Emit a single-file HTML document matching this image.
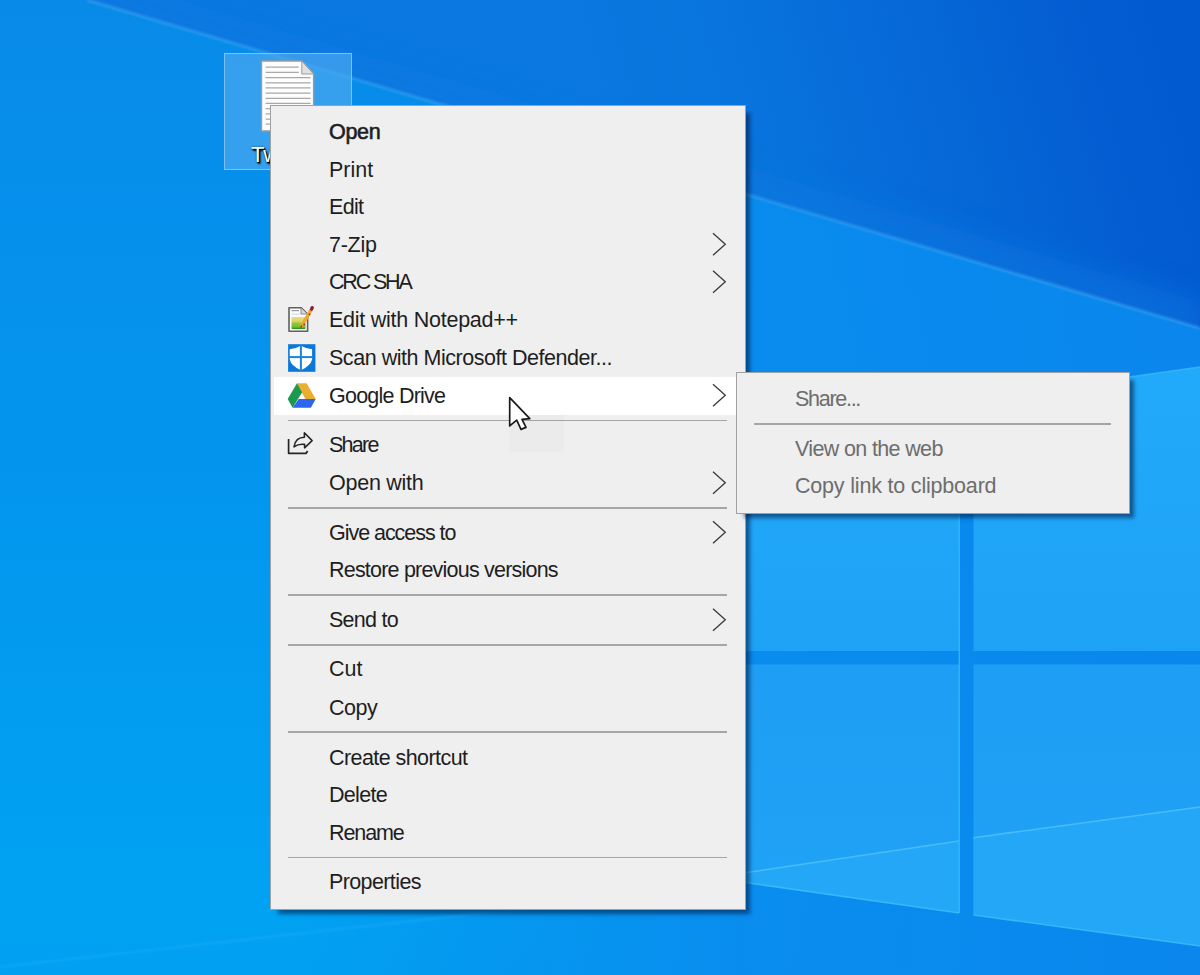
<!DOCTYPE html>
<html><head><meta charset="utf-8"><style>
html,body{margin:0;padding:0;width:1200px;height:975px;overflow:hidden;background:#0a8ae6;}
body{position:relative;font-family:"Liberation Sans", sans-serif;}
.t{position:absolute;font-size:21.5px;line-height:20px;white-space:nowrap;color:#1e1e1e;}
.sep{position:absolute;height:1.5px;background:#a6a6a6;}
svg{position:absolute;overflow:visible;}
</style></head><body>

<svg width="1200" height="975" style="left:0;top:0">
<defs>
<linearGradient id="gbase" x1="0" y1="0" x2="0" y2="1"><stop offset="0" stop-color="#088ae8"/><stop offset="0.2" stop-color="#068fec"/><stop offset="0.5" stop-color="#0396ee"/><stop offset="0.92" stop-color="#01a2f3"/><stop offset="1" stop-color="#01a0f2"/></linearGradient>
<linearGradient id="gover" x1="0" y1="0" x2="1200" y2="0" gradientUnits="userSpaceOnUse"><stop offset="0.25" stop-color="#0a88ec" stop-opacity="0"/><stop offset="0.62" stop-color="#0a8aee" stop-opacity="0.85"/><stop offset="1" stop-color="#0a86ec" stop-opacity="1"/></linearGradient>
<linearGradient id="gtop" x1="600" y1="150" x2="1150" y2="0" gradientUnits="userSpaceOnUse"><stop offset="0" stop-color="#0a78e0"/><stop offset="0.3" stop-color="#0873dc"/><stop offset="0.85" stop-color="#045ed2"/><stop offset="1" stop-color="#025ad0"/></linearGradient>
<clipPath id="ctop"><polygon points="87,0 1200,0 1200,328"/></clipPath>
<filter id="blur12" x="-20%" y="-50%" width="140%" height="200%"><feGaussianBlur stdDeviation="14"/></filter>
<linearGradient id="gpane" x1="0" y1="0" x2="0" y2="1"><stop offset="0" stop-color="#22aafa"/><stop offset="1" stop-color="#1ea2f6"/></linearGradient>
<linearGradient id="gpane2" x1="0" y1="0" x2="0" y2="1"><stop offset="0" stop-color="#1e9ef4"/><stop offset="1" stop-color="#20a2f6"/></linearGradient>
<filter id="blur1" x="-5%" y="-5%" width="110%" height="110%"><feGaussianBlur stdDeviation="1"/></filter>
</defs>
<rect width="1200" height="975" fill="url(#gbase)"/>
<rect width="1200" height="975" fill="url(#gover)"/>
<polygon points="87,0 1200,0 1200,328" fill="url(#gtop)"/>
<g clip-path="url(#ctop)"><line x1="87" y1="-8" x2="1200" y2="320" stroke="#0a7ae2" stroke-width="36" opacity="0.55" filter="url(#blur12)"/></g>
<line x1="87" y1="0" x2="1200" y2="328" stroke="#4aaef6" stroke-width="3" opacity="0.45" filter="url(#blur1)"/>
<!-- panes -->
<polygon points="745,431 959,401 959,651 745,651" fill="url(#gpane)"/>
<polygon points="973.5,399 1200,367 1200,651 973.5,651" fill="url(#gpane)"/>
<polygon points="745,664.5 959,664.5 959,913 745,882.5" fill="url(#gpane2)"/>
<polygon points="973.5,664.5 1200,664.5 1200,946 973.5,915" fill="url(#gpane2)"/>
<line x1="973.5" y1="399" x2="1200" y2="367" stroke="#40bcfc" stroke-width="1.5" opacity="0.7"/>
<polygon points="745,872.8 959,841 959,913 745,882.5" fill="#24a7f6"/>
<polygon points="973.5,837.7 1200,807 1200,946 973.5,915" fill="#24a7f6"/>
<line x1="745" y1="872.8" x2="959" y2="841" stroke="#50c4fc" stroke-width="1.6" opacity="0.8"/>
<line x1="973.5" y1="837.7" x2="1200" y2="807" stroke="#50c4fc" stroke-width="1.6" opacity="0.8"/>
<line x1="745" y1="882.5" x2="959" y2="913" stroke="#40c0fc" stroke-width="1.6" opacity="0.75"/>
<line x1="973.5" y1="915" x2="1200" y2="946" stroke="#40c0fc" stroke-width="1.6" opacity="0.75"/>
<line x1="959.3" y1="380" x2="959.3" y2="913" stroke="#30c4ff" stroke-width="1.3" opacity="0.85"/>
<line x1="0" y1="967" x2="745" y2="884" stroke="#30b4fa" stroke-width="2" opacity="0.35" filter="url(#blur1)"/>
</svg>

<div style="position:absolute;left:224px;top:52.5px;width:126px;height:115px;background:rgba(78,170,240,0.66);border:1.5px solid rgba(150,205,250,0.75)"></div>
<svg style="left:0;top:0" width="1200" height="975">
<path d="M261.5,61 H301.8 L313.6,73.6 V131 H261.5 Z" fill="#fdfdfd" stroke="#9a9a9a" stroke-width="1.4"/>
<path d="M301.8,61 V74 H313.6 Z" fill="#e0e0e0" stroke="#9a9a9a" stroke-width="1"/>
<g stroke="#a8a8a8" stroke-width="1.3">
<line x1="265.6" y1="67.2" x2="298.8" y2="67.2"/><line x1="265.6" y1="72.4" x2="298.8" y2="72.4"/>
<line x1="265.6" y1="77.7" x2="310.6" y2="77.7"/><line x1="265.6" y1="82.8" x2="310.6" y2="82.8"/>
<line x1="265.6" y1="87.9" x2="310.6" y2="87.9"/><line x1="265.6" y1="93.1" x2="310.6" y2="93.1"/>
<line x1="265.6" y1="98.3" x2="310.6" y2="98.3"/><line x1="265.6" y1="103.4" x2="310.6" y2="103.4"/>
<line x1="265.6" y1="108.7" x2="310.6" y2="108.7"/><line x1="265.6" y1="113.8" x2="310.6" y2="113.8"/>
<line x1="265.6" y1="119.1" x2="310.6" y2="119.1"/><line x1="265.6" y1="124.2" x2="310.6" y2="124.2"/>
</g>
</svg>
<div style="position:absolute;left:251px;top:145px;font-size:22px;line-height:20px;color:#fff;text-shadow:1px 1px 1px #000,1.5px 1.5px 2px #000,0 0 2px rgba(0,0,0,0.6);white-space:nowrap">Tw</div>

<div style="position:absolute;left:270px;top:105px;width:474px;height:803px;background:#efefef;border:1px solid #a0a0a0;box-shadow:6px 6px 4px -2px rgba(0,20,60,0.55)"></div>
<div style="position:absolute;left:274px;top:377px;width:468px;height:37.5px;background:#ffffff"></div>

<div class="t" style="left:329px;top:121.5px;-webkit-text-stroke:0.6px #1e1e1e;letter-spacing:-0.333px;">Open</div>
<div class="t" style="left:329px;top:159.5px;letter-spacing:0.000px;">Print</div>
<div class="t" style="left:329px;top:197px;letter-spacing:-0.667px;">Edit</div>
<div class="t" style="left:329px;top:234.5px;letter-spacing:-0.250px;">7-Zip</div>
<svg style="left:0;top:0" width="1" height="1"><polyline points="713,233.2 725.3,244.2 713,255.2" fill="none" stroke="#3a3a3a" stroke-width="1.3"/></svg>
<div class="t" style="left:329px;top:272px;letter-spacing:-2.167px;">CRC SHA</div>
<svg style="left:0;top:0" width="1" height="1"><polyline points="713,270.7 725.3,281.7 713,292.7" fill="none" stroke="#3a3a3a" stroke-width="1.3"/></svg>
<div class="t" style="left:329px;top:310px;letter-spacing:-0.250px;">Edit with Notepad++</div>
<div class="t" style="left:329px;top:347.5px;letter-spacing:-0.467px;">Scan with Microsoft Defender...</div>
<div class="t" style="left:329px;top:385.5px;letter-spacing:-0.773px;">Google Drive</div>
<svg style="left:0;top:0" width="1" height="1"><polyline points="713,384.2 725.3,395.2 713,406.2" fill="none" stroke="#3a3a3a" stroke-width="1.3"/></svg>
<div class="t" style="left:329px;top:434.5px;letter-spacing:-1.750px;">Share</div>
<div class="t" style="left:329px;top:473px;letter-spacing:-0.250px;">Open with</div>
<svg style="left:0;top:0" width="1" height="1"><polyline points="713,471.7 725.3,482.7 713,493.7" fill="none" stroke="#3a3a3a" stroke-width="1.3"/></svg>
<div class="t" style="left:329px;top:522.5px;letter-spacing:-1.038px;">Give access to</div>
<svg style="left:0;top:0" width="1" height="1"><polyline points="713,521.2 725.3,532.2 713,543.2" fill="none" stroke="#3a3a3a" stroke-width="1.3"/></svg>
<div class="t" style="left:329px;top:560px;letter-spacing:-0.792px;">Restore previous versions</div>
<div class="t" style="left:329px;top:610px;letter-spacing:-0.750px;">Send to</div>
<svg style="left:0;top:0" width="1" height="1"><polyline points="713,608.7 725.3,619.7 713,630.7" fill="none" stroke="#3a3a3a" stroke-width="1.3"/></svg>
<div class="t" style="left:329px;top:659px;letter-spacing:0.000px;">Cut</div>
<div class="t" style="left:329px;top:697.5px;letter-spacing:-0.500px;">Copy</div>
<div class="t" style="left:329px;top:747.5px;letter-spacing:-0.571px;">Create shortcut</div>
<div class="t" style="left:329px;top:785px;letter-spacing:-0.700px;">Delete</div>
<div class="t" style="left:329px;top:822.5px;letter-spacing:-1.100px;">Rename</div>
<div class="t" style="left:329px;top:872px;letter-spacing:-0.611px;">Properties</div>
<div class="sep" style="left:288px;top:419.75px;width:439px"></div>
<div class="sep" style="left:288px;top:507.25px;width:439px"></div>
<div class="sep" style="left:288px;top:594.25px;width:439px"></div>
<div class="sep" style="left:288px;top:644.25px;width:439px"></div>
<div class="sep" style="left:288px;top:731.25px;width:439px"></div>
<div class="sep" style="left:288px;top:856.95px;width:439px"></div>
<svg style="left:0;top:0" width="1" height="1">
<defs><linearGradient id="npg" x1="0" y1="0" x2="0" y2="1"><stop offset="0" stop-color="#e8dc80"/><stop offset="0.4" stop-color="#e0d060"/><stop offset="0.5" stop-color="#8ccc40"/><stop offset="0.82" stop-color="#70c030"/><stop offset="1" stop-color="#208a20"/></linearGradient></defs>
<path d="M289,307.7 H301 L307.6,314 V331.2 H289 Z" fill="#fafafa" stroke="#606060" stroke-width="1.6" stroke-linejoin="round"/>
<path d="M301,308 V314 H307.4" fill="#d8d8d8" stroke="#8a8a8a" stroke-width="1"/>
<line x1="291.5" y1="310.6" x2="299" y2="310.6" stroke="#9a9a9a" stroke-width="1.2"/>
<line x1="291.5" y1="314.2" x2="300" y2="314.2" stroke="#c8d8e8" stroke-width="1"/>
<path d="M291.5,317 H305.5 V328 Q305.5,329 304.5,329 H292.5 Q291.5,329 291.5,328 Z" fill="url(#npg)"/>
<line x1="301.2" y1="326.8" x2="311" y2="310" stroke="#eeaa28" stroke-width="3.4"/>
<line x1="310.8" y1="310.5" x2="312.3" y2="308" stroke="#a01838" stroke-width="3"/>
<circle cx="312.2" cy="307.6" r="1.7" fill="#901430"/>
<circle cx="309.5" cy="314.4" r="0.9" fill="#b02020"/>
<circle cx="304.2" cy="324.5" r="0.9" fill="#b02020"/>
<line x1="300.6" y1="327.6" x2="302" y2="325.5" stroke="#6a5030" stroke-width="1.4"/>
</svg>
<svg style="left:0;top:0" width="1" height="1">
<rect x="288.1" y="344.2" width="27.3" height="27.6" fill="#0a78d8"/>
<path d="M289.7,349.2 Q296,348.6 300.9,345.7 Q305.8,348.6 312.1,349.2 V359.5 Q310.5,366 300.9,370.2 Q291.3,366 289.7,359.5 Z" fill="#ffffff"/>
<rect x="299.9" y="345" width="2" height="26" fill="#1a84e0"/>
<rect x="289" y="356.1" width="24" height="2" fill="#1a84e0"/>
</svg>
<svg style="left:0;top:0" width="1" height="1">
<polygon points="297,383.3 306.6,383.3 315.7,399 305.3,399" fill="#ebaf30"/>
<polygon points="297,383.3 302.2,392.2 292.6,407.7 287.7,399" fill="#1c994e"/>
<polygon points="298.7,399 315.7,399 310.9,407.7 292.6,407.7" fill="#2d66ec"/>
</svg>
<svg style="left:0;top:0" width="1" height="1">
<path d="M288.6,439 V453.3 H306.2 L307.6,451" fill="none" stroke="#262626" stroke-width="1.7" stroke-linejoin="round"/>
<path d="M294,446.8 C295,440.5 299,437.3 304.4,437.3 V432.8 L312.1,440.6 L304.6,447.8 V444.4 C300.5,443.9 297,444.6 294,446.8 Z" fill="none" stroke="#262626" stroke-width="1.6" stroke-linejoin="round"/>
</svg>

<div style="position:absolute;left:736px;top:372px;width:392px;height:140px;background:#efefef;border:1px solid #a0a0a0;box-shadow:6px 6px 4px -2px rgba(0,20,60,0.55)"></div>

<div class="t" style="left:795px;top:389px;color:#6d6d6d;letter-spacing:-1.286px;">Share...</div>
<div class="t" style="left:795px;top:438.5px;color:#6d6d6d;letter-spacing:-0.643px;">View on the web</div>
<div class="t" style="left:795px;top:475.5px;color:#6d6d6d;letter-spacing:-0.190px;">Copy link to clipboard</div>
<div class="sep" style="left:754px;top:423.25px;width:357px"></div>
<div style="position:absolute;left:509px;top:415px;width:55px;height:37px;background:rgba(0,0,0,0.015)"></div>
<svg style="left:0;top:0" width="1" height="1">
<path d="M509.7,397.6 L509.7,425.9 L516.7,420.2 L521,429.4 L526,427.4 L522,419.3 L529.8,418.6 Z" fill="#ffffff" stroke="#1a1a1a" stroke-width="1.7" stroke-linejoin="round"/>
</svg>

</body></html>
